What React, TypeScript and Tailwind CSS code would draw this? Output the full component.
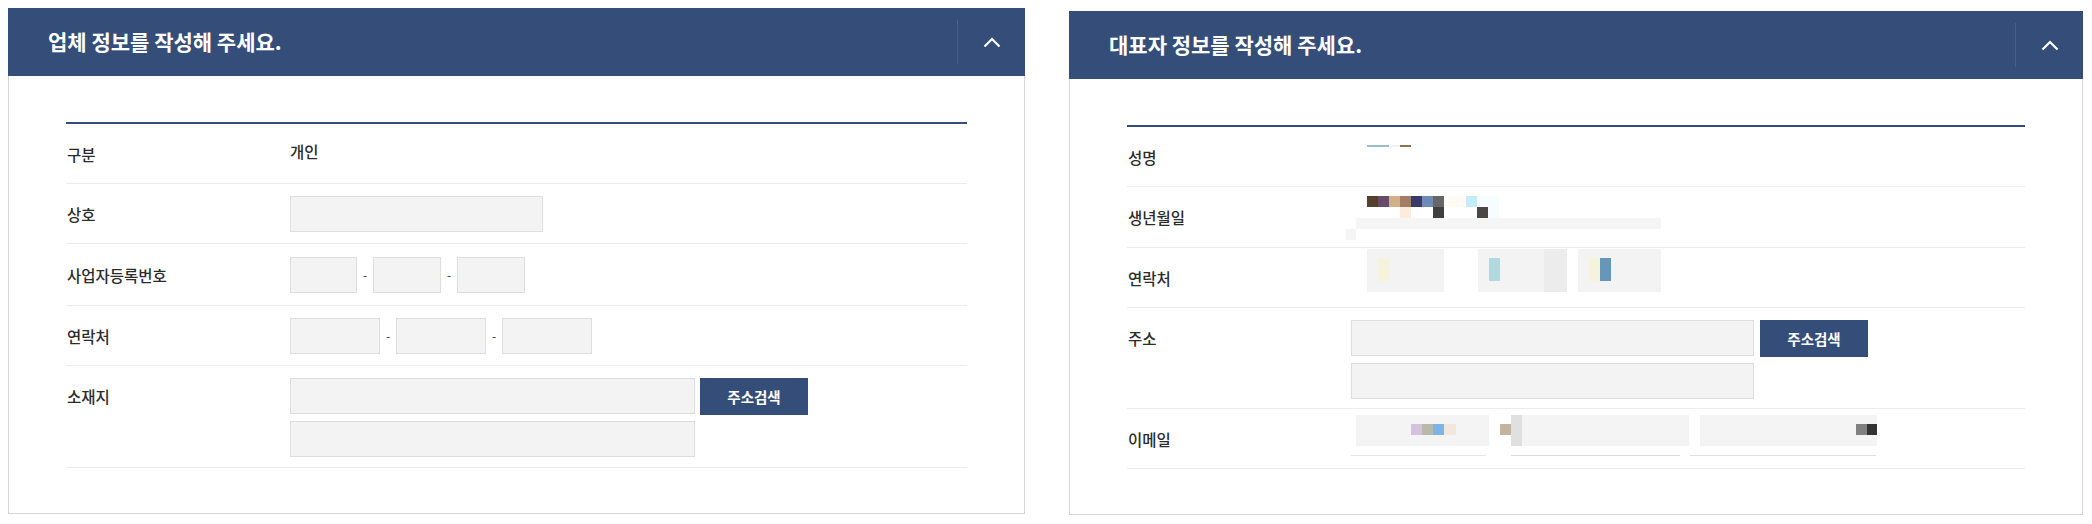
import { useState } from "react"

function Chevron({ open }: { open: boolean }) {
  return (
    <svg width="18" height="11" viewBox="0 0 18 11" fill="none" className={open ? "" : "rotate-180"}>
      <path d="M1.5 9.5 9 2l7.5 7.5" stroke="white" strokeWidth="2.2" />
    </svg>
  )
}

function PanelHeader({ title, open, onToggle }: { title: string; open: boolean; onToggle: () => void }) {
  return (
    <div className="flex h-[68px] items-center bg-[#344e79]">
      <h2 className="flex-1 pl-[40px] text-[21px] font-bold text-white">{title}</h2>
      <div className="h-[44px] border-l border-[#4a5f87]" />
      <button onClick={onToggle} className="flex h-full w-[67px] items-center justify-center">
        <Chevron open={open} />
      </button>
    </div>
  )
}

function Row({ label, className, children }: { label: string; className: string; children?: any }) {
  return (
    <div className={`flex border-b border-[#ececec] ${className}`}>
      <div className="w-[224px] shrink-0 pl-[1px] text-[15.5px] font-medium leading-[36px] text-[#2b2b2b]">{label}</div>
      <div className="flex-1">{children}</div>
    </div>
  )
}

function Input({ className }: { className: string }) {
  return <input className={`h-[36px] border border-[#dedede] bg-[#f3f3f3] outline-none ${className}`} />
}

function Dash() {
  return <span className="w-[16px] text-center text-[12px] text-[#333]">-</span>
}

function SearchButton() {
  return (
    <button className="h-[37px] w-[108px] bg-[#344e79] text-[14.5px] font-bold text-white">주소검색</button>
  )
}

function Panel({ title, className, children }: { title: string; className: string; children: any }) {
  const [open, setOpen] = useState(true)
  return (
    <section className={className}>
      <PanelHeader title={title} open={open} onToggle={() => setOpen(!open)} />
      {open && (
        <div className="border-x border-b border-[#d4d4d4] px-[57px] pt-[46px] pb-[45px]">
          <div className="border-t-2 border-[#344e79]">{children}</div>
        </div>
      )}
    </section>
  )
}

const birthTop = ["bg-[#54402f]", "bg-[#664c6a]", "bg-[#d1b088]", "bg-[#a57d64]", "bg-[#383a6a]", "bg-[#6a8cb6]", "bg-[#666666]", "bg-[#fffaf3]", "bg-[#fffaf3]", "bg-[#c4ecfa]", "bg-[#f7fdff]", "bg-[#f7fdff]"]
const birthBottom = ["", "", "", "bg-[#fdebdc]", "", "", "bg-[#3f3f3f]", "", "", "", "bg-[#4a4643]", "bg-[#f7fdff]"]

function CompanyForm() {
  return (
    <Panel title="업체 정보를 작성해 주세요." className="w-[1017px]">
      <Row label="구분" className="h-[60px] items-center">
        <span className="block pb-[4px] text-[15.5px] font-medium text-[#2b2b2b]">개인</span>
      </Row>
      <Row label="상호" className="h-[60px] items-center">
        <Input className="block w-[253px]" />
      </Row>
      <Row label="사업자등록번호" className="h-[62px] items-center">
        <div className="flex items-center">
          <Input className="w-[67px]" />
          <Dash />
          <Input className="w-[68px]" />
          <Dash />
          <Input className="w-[68px]" />
        </div>
      </Row>
      <Row label="연락처" className="h-[60px] items-center">
        <div className="flex items-center">
          <Input className="w-[90px]" />
          <Dash />
          <Input className="w-[90px]" />
          <Dash />
          <Input className="w-[90px]" />
        </div>
      </Row>
      <Row label="소재지" className="h-[102px] items-start pt-[12px]">
        <div className="flex flex-col gap-[6px]">
          <div className="flex gap-[5px]">
            <Input className="w-[405px]" />
            <SearchButton />
          </div>
          <Input className="w-[405px]" />
        </div>
      </Row>
    </Panel>
  )
}

function OwnerForm() {
  return (
    <Panel title="대표자 정보를 작성해 주세요." className="mt-[3px] w-[1014px]">
      <Row label="성명" className="h-[60px] items-center">
        <div className="ml-[16px] flex h-[2px] -translate-y-[11px]">
          <span className="w-[22px] bg-[#9cbccc]" />
          <span className="w-[11px] bg-[#eef4fa]" />
          <span className="w-[11px] bg-[#8b6e55]" />
        </div>
      </Row>
      <Row label="생년월일" className="h-[61px] items-center">
        <div className="flex flex-col pt-[2px]">
          <div className="ml-[16px] flex h-[11px]">
            {birthTop.map((c, i) => <span key={i} className={`w-[11px] ${c}`} />)}
          </div>
          <div className="ml-[16px] flex h-[11px]">
            {birthBottom.map((c, i) => <span key={i} className={`w-[11px] ${c}`} />)}
          </div>
          <div className="ml-[5px] h-[11px] w-[305px] bg-[#f5f5f5]" />
          <div className="-ml-[5px] h-[11px] w-[10px] bg-[#f5f5f5]" />
        </div>
      </Row>
      <Row label="연락처" className="h-[60px] items-center">
        <div className="ml-[16px] flex h-[43px] -translate-y-[7px] gap-[34px]">
          <div className="flex w-[77px] bg-[#f3f3f3] pt-[9px] pl-[11px]">
            <span className="h-[23px] w-[11px] bg-[#f5f3dc]" />
          </div>
          <div className="-mr-[23px] flex w-[89px] bg-[#f3f3f3]">
            <div className="flex flex-1 pt-[9px] pl-[11px]">
              <span className="h-[23px] w-[11px] bg-[#b3d9e0]" />
            </div>
            <div className="w-[23px] bg-[#ececec]" />
          </div>
          <div className="flex w-[83px] bg-[#f3f3f3] pt-[9px] pl-[11px]">
            <span className="h-[23px] w-[11px] bg-[#f5f3dc]" />
            <span className="h-[23px] w-[11px] bg-[#6896bb]" />
          </div>
        </div>
      </Row>
      <Row label="주소" className="h-[101px] items-start pt-[12px]">
        <div className="flex flex-col gap-[6px]">
          <div className="flex gap-[6px]">
            <Input className="w-[403px]" />
            <SearchButton />
          </div>
          <Input className="w-[403px]" />
        </div>
      </Row>
      <Row label="이메일" className="h-[60px] items-center">
        <div className="mb-[6px] flex flex-col">
          <div className="flex h-[31px]">
            <div className="ml-[5px] flex w-[133px] bg-[#f4f4f4] pt-[9px] pl-[55px]">
              <span className="h-[11px] w-[11px] bg-[#d4c1dc]" />
              <span className="h-[11px] w-[11px] bg-[#b8b9a8]" />
              <span className="h-[11px] w-[11px] bg-[#7db4e3]" />
              <span className="h-[11px] w-[12px] bg-[#f3e6dc]" />
            </div>
            <div className="ml-[11px] mt-[9px] h-[11px] w-[11px] bg-[#c4b49c]" />
            <div className="flex w-[178px] bg-[#f4f4f4]">
              <span className="w-[11px] bg-[#e0e0e0]" />
            </div>
            <div className="ml-[11px] flex w-[177px] bg-[#f4f4f4] pt-[9px] pl-[156px]">
              <span className="h-[11px] w-[11px] bg-[#808080]" />
              <span className="h-[11px] w-[10px] bg-[#333333]" />
            </div>
          </div>
          <div className="mt-[9px] flex h-[1px]">
            <span className="w-[135px] bg-[#e6e6e6]" />
            <span className="ml-[25px] w-[169px] bg-[#dddddd]" />
            <span className="ml-[10px] w-[186px] bg-[#e0e0e0]" />
          </div>
        </div>
      </Row>
    </Panel>
  )
}

export default function App() {
  return (
    <div className="flex w-[2092px] items-start gap-[44px] bg-white pt-[8px] pl-[8px] font-['Noto_Sans_CJK_KR','Malgun_Gothic',sans-serif]">
      <CompanyForm />
      <OwnerForm />
    </div>
  )
}
